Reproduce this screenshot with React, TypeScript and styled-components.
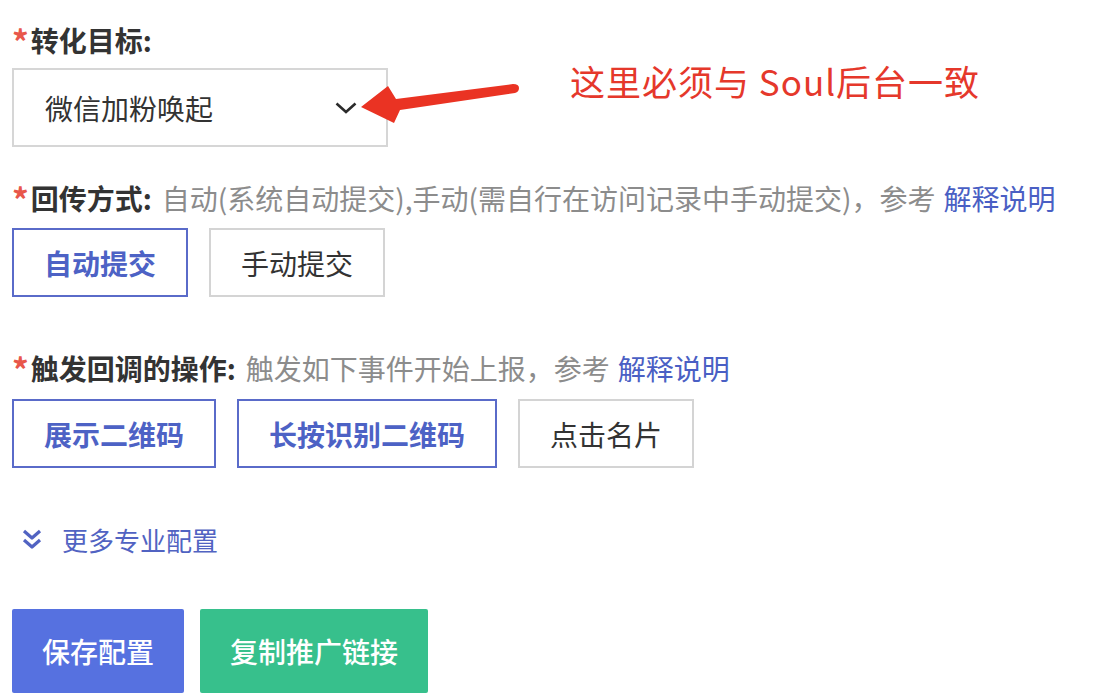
import React, { useState } from 'react'
import styled, { createGlobalStyle } from 'styled-components'

const GlobalStyle = createGlobalStyle`
  html, body {
    margin: 0;
    padding: 0;
    background: #ffffff;
  }
  body {
    font-family: "Noto Sans CJK SC", "Noto Sans", "Liberation Sans", sans-serif;
    color: #333333;
  }
`

const StyledPage = styled.div`
  position: relative;
  width: 1114px;
  height: 696px;
  padding: 20px 0 0 12px;
  box-sizing: border-box;
  overflow: hidden;
`

const StyledLabelRow = styled.div<{ $gap: number }>`
  display: flex;
  align-items: center;
  height: 40px;
  margin-top: ${(p) => p.$gap}px;
  font-size: 28px;
  line-height: 40px;
  white-space: nowrap;
`

const StyledStar = styled.span`
  color: #e8574b;
  font-size: 33px;
  font-weight: 700;
  margin-right: 2px;
  align-self: flex-start;
  line-height: 42px;
`

const StyledLabel = styled.span`
  font-weight: 700;
  color: #333333;
  margin-right: 10px;
`

const StyledHint = styled.span`
  color: #8c8c8c;
`

const StyledLink = styled.a`
  color: #4a5fc4;
  text-decoration: none;
  margin-left: 8px;
`

const StyledSelect = styled.div`
  display: flex;
  align-items: center;
  justify-content: space-between;
  box-sizing: border-box;
  width: 376px;
  height: 79px;
  margin-top: 8px;
  padding: 0 29px 0 31px;
  border: 2px solid #d6d6d6;
  font-size: 28px;
  color: #333333;
`

const StyledOptionRow = styled.div<{ $gap: number }>`
  display: flex;
  gap: 21px;
  margin-top: ${(p) => p.$gap}px;
`

const StyledOption = styled.button<{ $active: boolean }>`
  box-sizing: border-box;
  height: 69px;
  padding: 0 30px;
  background: #ffffff;
  border: 2px solid ${(p) => (p.$active ? '#5a6bc9' : '#d4d4d4')};
  color: ${(p) => (p.$active ? '#4d62c5' : '#333333')};
  font-family: inherit;
  font-size: 28px;
  font-weight: ${(p) => (p.$active ? 700 : 400)};
  cursor: pointer;
`

const StyledMore = styled.div`
  display: flex;
  align-items: center;
  height: 40px;
  margin-top: 51px;
  padding-left: 10px;
  gap: 20px;
  color: #5163c2;
  font-size: 26px;
`

const StyledActions = styled.div`
  display: flex;
  gap: 16px;
  margin-top: 50px;
`

const StyledActionButton = styled.button<{ $color: string; $width: number }>`
  width: ${(p) => p.$width}px;
  height: 84px;
  border: none;
  border-radius: 2px;
  background: ${(p) => p.$color};
  color: #ffffff;
  font-family: inherit;
  font-size: 28px;
  font-weight: 500;
  cursor: pointer;
`

const StyledNote = styled.div`
  position: absolute;
  left: 570px;
  top: 58px;
  color: #e5382b;
  font-size: 35px;
  letter-spacing: 1px;
  line-height: 46px;
  white-space: nowrap;
`

const StyledArrow = styled.svg`
  position: absolute;
  left: 355px;
  top: 78px;
`

const Chevron = () => (
  <svg width="22" height="12" viewBox="0 0 22 12">
    <path d="M1.5 1.5 L11 10 L20.5 1.5" fill="none" stroke="#2b2b2b" strokeWidth="2.6" />
  </svg>
)

const DoubleChevron = () => (
  <svg width="20" height="20" viewBox="0 0 20 20">
    <path
      d="M2 2 L10 9 L18 2 M2 11 L10 18 L18 11"
      fill="none"
      stroke="#5163c2"
      strokeWidth="3.2"
      strokeLinejoin="round"
    />
  </svg>
)

const callbackModes = ['自动提交', '手动提交']
const triggers = ['展示二维码', '长按识别二维码', '点击名片']

export default function App() {
  const [mode, setMode] = useState('自动提交')
  const [active, setActive] = useState(['展示二维码', '长按识别二维码'])

  const toggle = (name: string) =>
    setActive((list) => (list.includes(name) ? list.filter((n) => n !== name) : [...list, name]))

  return (
    <StyledPage>
      <GlobalStyle />
      <StyledLabelRow $gap={0}>
        <StyledStar>*</StyledStar>
        <StyledLabel>转化目标:</StyledLabel>
      </StyledLabelRow>
      <StyledSelect>
        <span>微信加粉唤起</span>
        <Chevron />
      </StyledSelect>

      <StyledLabelRow $gap={31}>
        <StyledStar>*</StyledStar>
        <StyledLabel>回传方式:</StyledLabel>
        <StyledHint>自动(系统自动提交),手动(需自行在访问记录中手动提交)，参考</StyledHint>
        <StyledLink>解释说明</StyledLink>
      </StyledLabelRow>
      <StyledOptionRow $gap={10}>
        {callbackModes.map((m) => (
          <StyledOption key={m} $active={mode === m} onClick={() => setMode(m)}>
            {m}
          </StyledOption>
        ))}
      </StyledOptionRow>

      <StyledLabelRow $gap={51}>
        <StyledStar>*</StyledStar>
        <StyledLabel>触发回调的操作:</StyledLabel>
        <StyledHint>触发如下事件开始上报，参考</StyledHint>
        <StyledLink>解释说明</StyledLink>
      </StyledLabelRow>
      <StyledOptionRow $gap={11}>
        {triggers.map((t) => (
          <StyledOption key={t} $active={active.includes(t)} onClick={() => toggle(t)}>
            {t}
          </StyledOption>
        ))}
      </StyledOptionRow>

      <StyledMore>
        <DoubleChevron />
        <span>更多专业配置</span>
      </StyledMore>

      <StyledActions>
        <StyledActionButton $color="#5671e0" $width={172}>
          保存配置
        </StyledActionButton>
        <StyledActionButton $color="#37c08c" $width={228}>
          复制推广链接
        </StyledActionButton>
      </StyledActions>

      <StyledArrow width="170" height="50" viewBox="0 0 170 50">
        <path
          d="M6 29 L33 8 L41 21 L158 6 Q164 6 164 10 Q164 14 160 15 L45 32 L39 45 Z"
          fill="#ea3323"
        />
      </StyledArrow>
      <StyledNote>这里必须与 Soul后台一致</StyledNote>
    </StyledPage>
  )
}
